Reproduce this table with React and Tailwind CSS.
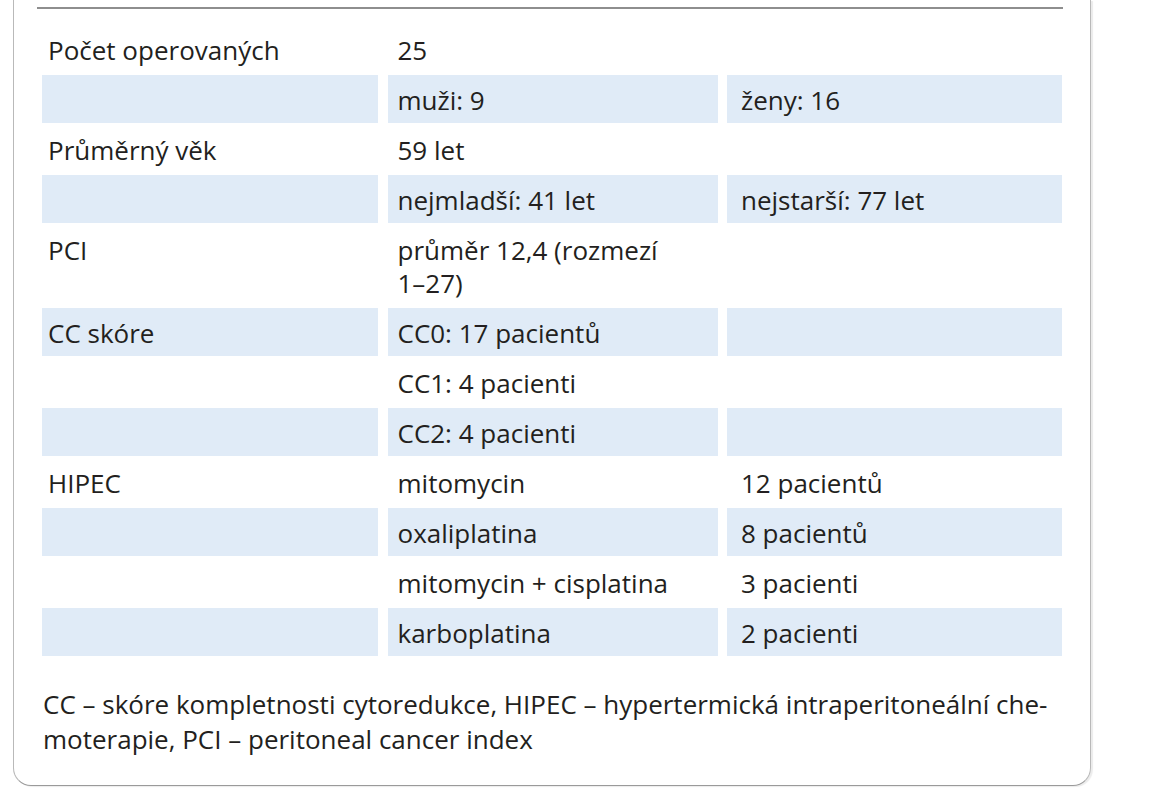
const rows = [
  ['Počet operovaných', '25', ''],
  ['', 'muži: 9', 'ženy: 16'],
  ['Průměrný věk', '59 let', ''],
  ['', 'nejmladší: 41 let', 'nejstarší: 77 let'],
  ['PCI', <>průměr 12,4 (rozmezí<br />1–27)</>, ''],
  ['CC skóre', 'CC0: 17 pacientů', ''],
  ['', 'CC1: 4 pacienti', ''],
  ['', 'CC2: 4 pacienti', ''],
  ['HIPEC', 'mitomycin', '12 pacientů'],
  ['', 'oxaliplatina', '8 pacientů'],
  ['', 'mitomycin + cisplatina', '3 pacienti'],
  ['', 'karboplatina', '2 pacienti'],
]

const pads = ['pl-[6px]', 'pl-[10px]', 'pl-[14px]']

export default function App() {
  return (
    <div className="min-h-screen bg-white text-[#231f20] font-['Open_Sans',sans-serif] text-[26px] leading-[33px]">
      <div className="ml-[13px] w-[1078px] border-x border-b border-x-[#b9b9b9] border-b-[#9a9a9a] rounded-b-[18px] pt-[7px] pb-[28px] shadow-[2px_1px_1px_rgba(0,0,0,0.08)]">
        <div className="ml-[23px] w-[1026px] h-[1.5px] bg-[#8e8e8e]" />

        <div className="ml-[28px] mt-[16px] grid grid-cols-[336px_330px_335px] gap-x-[9.5px] gap-y-[2px]">
          {rows.map((row, i) =>
            row.map((cell, j) => (
              <div
                key={i + '-' + j}
                className={`${pads[j]} pr-1 pt-[9px] pb-[6px] ${i % 2 === 1 ? 'bg-[#e0ebf7]' : ''}`}
              >
                {cell}
              </div>
            ))
          )}
        </div>

        <p className="ml-[29px] mt-[31px] leading-[35px] whitespace-nowrap">
          CC – skóre kompletnosti cytoredukce, HIPEC – hypertermická intraperitoneální che-
          <br />
          moterapie, PCI – peritoneal cancer index
        </p>
      </div>
    </div>
  )
}
